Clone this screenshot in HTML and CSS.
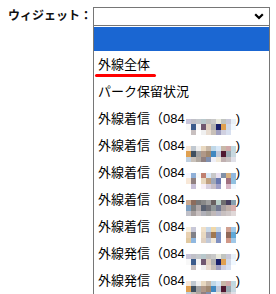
FILE: index.html
```html
<!DOCTYPE html>
<html lang="ja">
<head>
    <meta charset="UTF-8">
    <title>ウィジェット</title>
    <link rel="stylesheet" href="styles.css">
</head>
<body>
    <div class="widget-row">
        <label class="widget-label">ウィジェット：</label>
        <div class="picker">
            <div class="select-box">
                <svg class="chevron" width="10" height="7" viewBox="0 0 10 7">
                    <polyline points="1.2,1.2 5,5 8.8,1.2" fill="none" stroke="#000" stroke-width="2.2"/>
                </svg>
            </div>
            <ul class="options">
                <li class="option selected"></li>
                <li class="option marked">外線全体<span class="underline"></span></li>
                <li class="option">パーク保留状況</li>
                <li class="option">外線着信（084<span class="mosaic" data-pattern="a"></span>)</li>
                <li class="option">外線着信（084<span class="mosaic" data-pattern="b"></span>)</li>
                <li class="option">外線着信（084<span class="mosaic" data-pattern="c"></span>)</li>
                <li class="option">外線着信（084<span class="mosaic" data-pattern="d"></span>)</li>
                <li class="option">外線着信（084<span class="mosaic" data-pattern="e"></span>)</li>
                <li class="option">外線発信（084<span class="mosaic" data-pattern="a"></span>)</li>
                <li class="option">外線発信（084<span class="mosaic" data-pattern="b"></span>)</li>
            </ul>
        </div>
    </div>

    <script>
        // モザイクの色 (10列 x 3行)
        const patterns = {
            a: ['#c8c4d8', '#c0c0c8', '#c4c8cc', '#b8c8cc', '#c0c0c0', '#c8c8c8', '#e8e8dc', '#c0c4c0', '#c8c8d8', '#e8f0f8',
                '#f8f8f8', '#3c5c8c', '#f4f4f4', '#705870', '#e0d0c0', '#b0b0b0', '#18206c', '#e0a050', '#d0d8e8', '#f0f8ff',
                '#ffffff', '#c8c0c0', '#ffffff', '#f0f0f0', '#e8dcd0', '#c8c0b8', '#a0a0c0', '#d0d0e0', '#d8e0f0', '#ffffff'],
            b: ['#f8e8d8', '#c0c8d0', '#f0f0f0', '#e8d8c0', '#c8b8a8', '#c0d8e8', '#d8e8f8', '#c8b8a8', '#d0a8a8', '#c0d8e0',
                '#e0a050', '#405060', '#a0a0a0', '#b09888', '#a08870', '#4088c0', '#c0c8d8', '#501830', '#98a8b0', '#c8d8e0',
                '#c0d0e0', '#c8c0b8', '#b0a8a0', '#908080', '#8090b0', '#f0f0f8', '#f0e8d8', '#c0b0b0', '#c8c0c0', '#e0e0e8'],
            c: ['#f8f8ff', '#90b0d8', '#f8f8f8', '#c08070', '#d8e8f8', '#c8c8c8', '#e8e0f0', '#8090a8', '#d8b080', '#90b8e0',
                '#f8e8d8', '#908080', '#ffffff', '#e8d8c0', '#c0a080', '#a0a8b8', '#6878b0', '#ffffff', '#a07080', '#90c0e0',
                '#ffffff', '#c8c0d8', '#ffffff', '#f8f0f8', '#d8d0e0', '#c8c0c8', '#a0a0c8', '#ffffff', '#d8b8c8', '#f0f8ff'],
            d: ['#c8a890', '#8c6c5c', '#787878', '#888888', '#a0a0a0', '#686060', '#b8d0c8', '#707070', '#484060', '#88a0b0',
                '#80a0c0', '#808080', '#b0a8a8', '#586070', '#707078', '#909898', '#707890', '#a8a0a0', '#c0b0a8', '#d8b0b0',
                '#c0c0c8', '#a8a0a0', '#c8c0c0', '#b0b0b8', '#a8a8a8', '#c0b8b8', '#b8b8c8', '#c8c0c0', '#d0c8c8', '#e0d8d8'],
            e: ['#f8f0e0', '#c8c8d8', '#ffffff', '#f0e0c8', '#c8d8e8', '#f0d8a8', '#c8d8e8', '#ffffff', '#d0a090', '#a0c8e8',
                '#e8d0b0', '#808088', '#ffffff', '#e8d8c0', '#a8a8b8', '#a07850', '#7890c0', '#ffffff', '#906858', '#60a8d8',
                '#e0c8a0', '#90b8e0', '#ffffff', '#e0d0c0', '#c0c8d8', '#f0e8d8', '#8090c0', '#ffffff', '#d09888', '#a0c8e8']
        };

        document.querySelectorAll('.mosaic').forEach(m => {
            patterns[m.dataset.pattern].forEach(color => {
                const cell = document.createElement('span');
                cell.style.background = color;
                m.appendChild(cell);
            });
        });
    </script>
</body>
</html>
```

FILE: styles.css
```css
body {
    margin: 0;
    padding: 0;
    background: #fff;
    color: #000;
    font-family: 'Liberation Sans', 'Noto Sans CJK JP', sans-serif;
    overflow: hidden;
}
.widget-row {
    display: flex;
    align-items: flex-start;
    padding: 7px 0 0 8px;
    height: 287px;
}
.widget-label {
    font-size: 12px;
    font-weight: bold;
    line-height: 19px;
    width: 85px;
    white-space: nowrap;
    color: #111;
}
.picker {
    display: flex;
    flex-direction: column;
    width: 177px;
}
.select-box {
    height: 17px;
    border: 1px solid #767676;
    display: flex;
    align-items: center;
    justify-content: flex-end;
    padding-right: 5px;
}
.options {
    list-style: none;
    margin: 0;
    padding: 1px 0 0;
    border-left: 1px solid #767676;
    border-right: 1px solid #767676;
    flex: 1;
    overflow: hidden;
}
.option {
    position: relative;
    height: 27px;
    line-height: 27px;
    padding-left: 4px;
    font-size: 13px;
    white-space: nowrap;
}
.option.selected {
    height: 24px;
    background: #1a66d2;
}
.underline {
    position: absolute;
    left: 1px;
    top: 23px;
    width: 61px;
    height: 3px;
    border-radius: 2px;
    background: #f00;
}
.mosaic {
    display: inline-grid;
    grid-template-columns: repeat(10, 5px);
    grid-template-rows: 5px 6px 5px;
    vertical-align: -1px;
    margin-left: 1px;
}
```
